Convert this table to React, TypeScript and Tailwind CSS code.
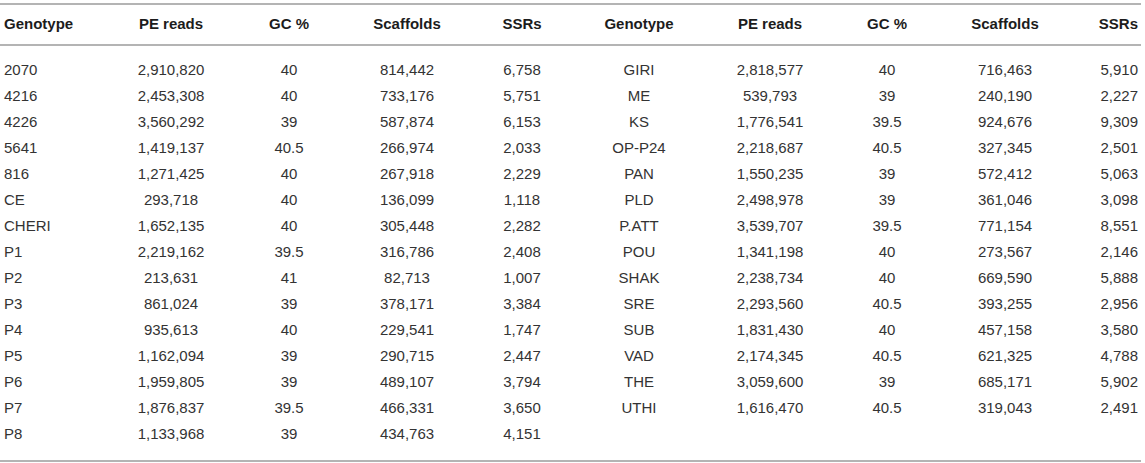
import React from 'react';

type Row = [string, string, string, string, string];

const left: Row[] = [
  ['2070', '2,910,820', '40', '814,442', '6,758'],
  ['4216', '2,453,308', '40', '733,176', '5,751'],
  ['4226', '3,560,292', '39', '587,874', '6,153'],
  ['5641', '1,419,137', '40.5', '266,974', '2,033'],
  ['816', '1,271,425', '40', '267,918', '2,229'],
  ['CE', '293,718', '40', '136,099', '1,118'],
  ['CHERI', '1,652,135', '40', '305,448', '2,282'],
  ['P1', '2,219,162', '39.5', '316,786', '2,408'],
  ['P2', '213,631', '41', '82,713', '1,007'],
  ['P3', '861,024', '39', '378,171', '3,384'],
  ['P4', '935,613', '40', '229,541', '1,747'],
  ['P5', '1,162,094', '39', '290,715', '2,447'],
  ['P6', '1,959,805', '39', '489,107', '3,794'],
  ['P7', '1,876,837', '39.5', '466,331', '3,650'],
  ['P8', '1,133,968', '39', '434,763', '4,151'],
];

const right: (Row | null)[] = [
  ['GIRI', '2,818,577', '40', '716,463', '5,910'],
  ['ME', '539,793', '39', '240,190', '2,227'],
  ['KS', '1,776,541', '39.5', '924,676', '9,309'],
  ['OP-P24', '2,218,687', '40.5', '327,345', '2,501'],
  ['PAN', '1,550,235', '39', '572,412', '5,063'],
  ['PLD', '2,498,978', '39', '361,046', '3,098'],
  ['P.ATT', '3,539,707', '39.5', '771,154', '8,551'],
  ['POU', '1,341,198', '40', '273,567', '2,146'],
  ['SHAK', '2,238,734', '40', '669,590', '5,888'],
  ['SRE', '2,293,560', '40.5', '393,255', '2,956'],
  ['SUB', '1,831,430', '40', '457,158', '3,580'],
  ['VAD', '2,174,345', '40.5', '621,325', '4,788'],
  ['THE', '3,059,600', '39', '685,171', '5,902'],
  ['UTHI', '1,616,470', '40.5', '319,043', '2,491'],
  null,
];

const headers = ['Genotype', 'PE reads', 'GC %', 'Scaffolds', 'SSRs', 'Genotype', 'PE reads', 'GC %', 'Scaffolds', 'SSRs'];

// per-column alignment, matched to the reference
const align = [
  'text-left pl-[4px]',
  'text-center',
  'text-center',
  'text-center',
  'text-center',
  'text-center',
  'text-center',
  'text-center',
  'text-center',
  'text-right pr-[3px]',
];

const cols = 'grid grid-cols-[112px_118px_118px_118px_112px_122px_140px_94px_142px_65px]';

export default function App() {
  return (
    <div className="w-[1145px] h-[463px] bg-white pt-[3px] font-['Liberation_Sans',Arial,sans-serif] text-[15px]">
      <div className="w-[1141px] border-t-2 border-b-2 border-[#b4b4b4]">
        <div className={`${cols} h-[41px] items-center border-b-2 border-[#b4b4b4] font-bold text-[#1c1c1c]`}>
          {headers.map((h, i) => (
            <div key={i} className={align[i]}>{h}</div>
          ))}
        </div>
        <div className="pt-[11px] pb-[13px] text-[#333333]">
          {left.map((row, r) => {
            const cells = [...row, ...(right[r] ?? ['', '', '', '', ''])];
            return (
              <div key={r} className={`${cols} h-[26px] items-center`}>
                {cells.map((c, i) => (
                  <div key={i} className={align[i]}>{c}</div>
                ))}
              </div>
            );
          })}
        </div>
      </div>
    </div>
  );
}
